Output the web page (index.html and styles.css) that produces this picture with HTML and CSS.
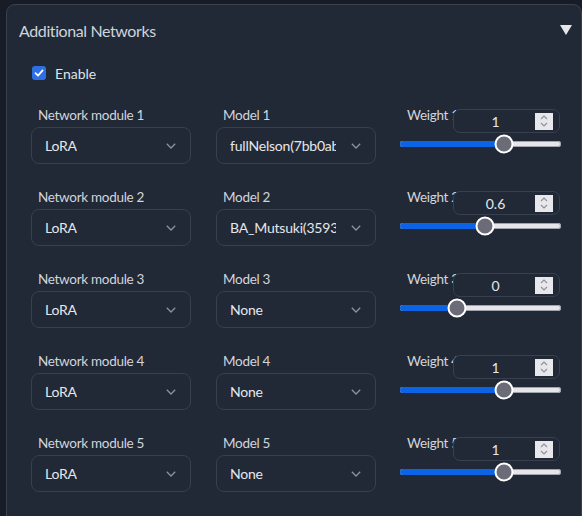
FILE: index.html
```html
<!DOCTYPE html>
<html>
<head>
<meta charset="utf-8">
<link rel="stylesheet" href="styles.css">
</head>
<body>
<div class="panel">
  <div class="header">
    <span class="title">Additional Networks</span>
    <span class="caret"></span>
  </div>
  <label class="enable">
    <span class="check"><svg width="10" height="10" viewBox="0 0 10 10"><path d="M1.5 5.2 L4 7.6 L8.6 2.4" fill="none" stroke="#fff" stroke-width="1.8" stroke-linecap="round" stroke-linejoin="round"/></svg></span>
    <span>Enable</span>
  </label>

  <div class="rows">
    <div class="row">
      <div class="field"><div class="lbl">Network module 1</div><div class="select"><span class="val">LoRA</span><svg class="chev" width="10" height="6" viewBox="0 0 10 6"><path d="M0.8 0.8 L5 5 L9.2 0.8" fill="none" stroke="#8b92a0" stroke-width="1.3"/></svg></div></div>
      <div class="field"><div class="lbl">Model 1</div><div class="select"><span class="val">fullNelson(7bb0ab</span><svg class="chev" width="10" height="6" viewBox="0 0 10 6"><path d="M0.8 0.8 L5 5 L9.2 0.8" fill="none" stroke="#8b92a0" stroke-width="1.3"/></svg></div></div>
      <div class="weight">
        <div class="lbl wl">Weight 1</div>
        <div class="num"><span class="nv">1</span><span class="spin"><svg width="10" height="14" viewBox="0 0 10 14"><path d="M2 5 L5 2 L8 5 M2 9 L5 12 L8 9" fill="none" stroke="#8b8f9a" stroke-width="1.1"/></svg></span></div>
        <div class="slider" style="--v:1"><div class="fill"></div><div class="thumb"></div></div>
      </div>
    </div>

    <div class="row">
      <div class="field"><div class="lbl">Network module 2</div><div class="select"><span class="val">LoRA</span><svg class="chev" width="10" height="6" viewBox="0 0 10 6"><path d="M0.8 0.8 L5 5 L9.2 0.8" fill="none" stroke="#8b92a0" stroke-width="1.3"/></svg></div></div>
      <div class="field"><div class="lbl">Model 2</div><div class="select"><span class="val">BA_Mutsuki(35938</span><svg class="chev" width="10" height="6" viewBox="0 0 10 6"><path d="M0.8 0.8 L5 5 L9.2 0.8" fill="none" stroke="#8b92a0" stroke-width="1.3"/></svg></div></div>
      <div class="weight">
        <div class="lbl wl">Weight 2</div>
        <div class="num"><span class="nv">0.6</span><span class="spin"><svg width="10" height="14" viewBox="0 0 10 14"><path d="M2 5 L5 2 L8 5 M2 9 L5 12 L8 9" fill="none" stroke="#8b8f9a" stroke-width="1.1"/></svg></span></div>
        <div class="slider" style="--v:0.6"><div class="fill"></div><div class="thumb"></div></div>
      </div>
    </div>

    <div class="row">
      <div class="field"><div class="lbl">Network module 3</div><div class="select"><span class="val">LoRA</span><svg class="chev" width="10" height="6" viewBox="0 0 10 6"><path d="M0.8 0.8 L5 5 L9.2 0.8" fill="none" stroke="#8b92a0" stroke-width="1.3"/></svg></div></div>
      <div class="field"><div class="lbl">Model 3</div><div class="select"><span class="val">None</span><svg class="chev" width="10" height="6" viewBox="0 0 10 6"><path d="M0.8 0.8 L5 5 L9.2 0.8" fill="none" stroke="#8b92a0" stroke-width="1.3"/></svg></div></div>
      <div class="weight">
        <div class="lbl wl">Weight 3</div>
        <div class="num"><span class="nv">0</span><span class="spin"><svg width="10" height="14" viewBox="0 0 10 14"><path d="M2 5 L5 2 L8 5 M2 9 L5 12 L8 9" fill="none" stroke="#8b8f9a" stroke-width="1.1"/></svg></span></div>
        <div class="slider" style="--v:0"><div class="fill"></div><div class="thumb"></div></div>
      </div>
    </div>

    <div class="row">
      <div class="field"><div class="lbl">Network module 4</div><div class="select"><span class="val">LoRA</span><svg class="chev" width="10" height="6" viewBox="0 0 10 6"><path d="M0.8 0.8 L5 5 L9.2 0.8" fill="none" stroke="#8b92a0" stroke-width="1.3"/></svg></div></div>
      <div class="field"><div class="lbl">Model 4</div><div class="select"><span class="val">None</span><svg class="chev" width="10" height="6" viewBox="0 0 10 6"><path d="M0.8 0.8 L5 5 L9.2 0.8" fill="none" stroke="#8b92a0" stroke-width="1.3"/></svg></div></div>
      <div class="weight">
        <div class="lbl wl">Weight 4</div>
        <div class="num"><span class="nv">1</span><span class="spin"><svg width="10" height="14" viewBox="0 0 10 14"><path d="M2 5 L5 2 L8 5 M2 9 L5 12 L8 9" fill="none" stroke="#8b8f9a" stroke-width="1.1"/></svg></span></div>
        <div class="slider" style="--v:1"><div class="fill"></div><div class="thumb"></div></div>
      </div>
    </div>

    <div class="row">
      <div class="field"><div class="lbl">Network module 5</div><div class="select"><span class="val">LoRA</span><svg class="chev" width="10" height="6" viewBox="0 0 10 6"><path d="M0.8 0.8 L5 5 L9.2 0.8" fill="none" stroke="#8b92a0" stroke-width="1.3"/></svg></div></div>
      <div class="field"><div class="lbl">Model 5</div><div class="select"><span class="val">None</span><svg class="chev" width="10" height="6" viewBox="0 0 10 6"><path d="M0.8 0.8 L5 5 L9.2 0.8" fill="none" stroke="#8b92a0" stroke-width="1.3"/></svg></div></div>
      <div class="weight">
        <div class="lbl wl">Weight 5</div>
        <div class="num"><span class="nv">1</span><span class="spin"><svg width="10" height="14" viewBox="0 0 10 14"><path d="M2 5 L5 2 L8 5 M2 9 L5 12 L8 9" fill="none" stroke="#8b8f9a" stroke-width="1.1"/></svg></span></div>
        <div class="slider" style="--v:1"><div class="fill"></div><div class="thumb"></div></div>
      </div>
    </div>
  </div>
</div>
</body>
</html>
```

FILE: styles.css
```css
html, body {
  margin: 0;
  padding: 0;
  background: #171c27;
  height: 516px;
  overflow: hidden;
}
body {
  font-family: Lato, "Noto Sans", sans-serif;
  color: #d1d5db;
  padding-top: 4px;
  padding-left: 6px;
  box-sizing: border-box;
}
.panel {
  width: 576px;
  background: #212937;
  border: 1px solid #3a4250;
  border-radius: 9px 9px 0 0;
  height: 540px;
  box-sizing: border-box;
  padding: 15px 0 0 12px;
}
.header {
  display: flex;
  align-items: center;
  justify-content: space-between;
  height: 20px;
  padding-right: 9px;
}
.title {
  font-size: 16px;
  letter-spacing: -0.4px;
  color: #cfd4dc;
}
.caret {
  width: 0;
  height: 0;
  border-left: 6px solid transparent;
  border-right: 6px solid transparent;
  border-top: 10px solid #e5e7eb;
}
.enable {
  display: flex;
  align-items: center;
  gap: 9px;
  margin-top: 23px;
  margin-left: 13px;
  height: 20px;
  font-size: 14px;
  color: #dfe3e8;
}
.check {
  width: 14px;
  height: 14px;
  background: #2f6fe4;
  border-radius: 3px;
  display: flex;
  align-items: center;
  justify-content: center;
}
.rows {
  margin-top: 24px;
  padding-left: 12px;
  display: flex;
  flex-direction: column;
  gap: 25px;
}
.row {
  display: grid;
  grid-template-columns: 160px 160px 160px;
  column-gap: 25px;
  height: 57px;
}
.row > .weight { margin-left: -1px; }
.lbl {
  font-size: 13.5px;
  letter-spacing: -0.3px;
  line-height: 16px;
  height: 16px;
  color: #d1d5db;
  padding-left: 7px;
  white-space: nowrap;
}
.select {
  margin-top: 4px;
  height: 37px;
  border: 1px solid #384050;
  border-radius: 8px;
  box-sizing: border-box;
  display: flex;
  align-items: center;
  justify-content: space-between;
  padding: 0 14px 0 13px;
  font-size: 14px;
  letter-spacing: -0.2px;
  color: #e5e7eb;
  overflow: hidden;
}
.val {
  white-space: nowrap;
  overflow: hidden;
  max-width: 106px;
}
.chev { flex: none; }
.weight {
  position: relative;
}
.num {
  position: absolute;
  z-index: 1;
  left: 53px;
  top: 2px;
  width: 107px;
  height: 24px;
  box-sizing: border-box;
  border: 1px solid #384050;
  border-radius: 7px;
  background: #212937;
  display: flex;
  align-items: center;
  font-size: 14px;
  color: #e5e7eb;
}
.nv {
  flex: 1;
  text-align: center;
  padding-left: 2px;
}
.spin {
  width: 18px;
  height: 17px;
  background: #e8e8ec;
  margin-right: 6px;
  display: flex;
  align-items: center;
  justify-content: center;
}
.slider {
  position: relative;
  margin-top: 18px;
  height: 6px;
  border-radius: 3px;
  background: #e6e6ea;
  box-shadow: inset 0 0 0 1px #9ea3ad;
}
.fill {
  height: 100%;
  border-radius: 3px 0 0 3px;
  background: #0b63e6;
  width: calc(9.7px + (var(--v) + 1) / 3 * (100% - 19.4px));
}
.thumb {
  position: absolute;
  z-index: 2;
  top: 50%;
  left: calc(9.7px + (var(--v) + 1) / 3 * (100% - 19.4px));
  width: 19px;
  height: 19px;
  box-sizing: border-box;
  border: 2px solid #ffffff;
  background: #6b6c78;
  border-radius: 50%;
  transform: translate(-50%, -50%);
}
```
